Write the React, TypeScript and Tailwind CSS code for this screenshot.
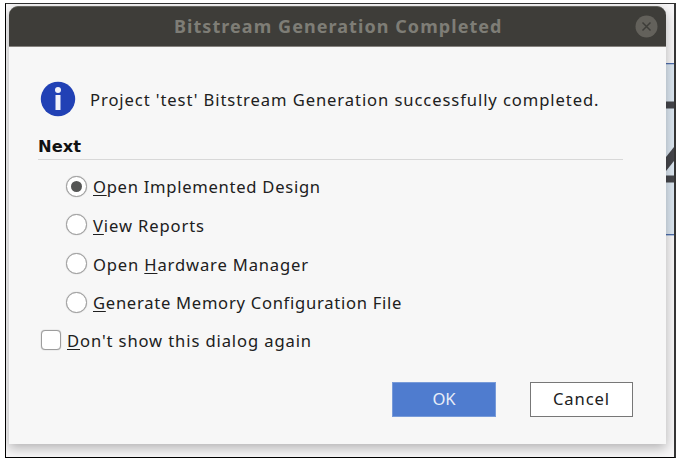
import React from "react";

function Radio({ checked = false, children, track }: { checked?: boolean; children: React.ReactNode; track: string }) {
  return (
    <label className="flex h-[38.6px] items-center">
      <span className="flex size-[21px] shrink-0 items-center justify-center rounded-full border-[1.5px] border-[#9d9d9d] bg-white shadow-[0_0_1px_#9d9d9d]">
        {checked && <span className="size-[11px] rounded-full bg-[#555655]" />}
      </span>
      <span className={`ml-[6px] whitespace-nowrap pt-[3px] ${track}`}>{children}</span>
    </label>
  );
}

function Key({ children }: { children: string }) {
  return <span className="underline decoration-1 underline-offset-2">{children}</span>;
}

export default function App() {
  return (
    <div className="h-[463px] w-[682px] overflow-hidden bg-white pl-[5px] pt-[3px] font-['Noto_Sans',sans-serif] text-[16.6px] text-[#202020]">
      <div className="relative h-[455px] w-[671px] overflow-hidden border border-black border-t-[#303030] border-r-2 border-r-[#353535] bg-[#f7f6f7] pl-[3px] pt-[2px]">
        <svg className="absolute left-[650px] top-[59px]" width="18" height="173" viewBox="0 0 18 173">
          <path fill="#dbe6f0" d="M0 0h18v173H0z" />
          <path fill="#4d6dac" d="M0 0h18v1.3H0zM0 171h18v1.3H0z" />
          <path fill="#45464b" d="M0 38.5h18v7H0zM0 112.5h18v7H0z" />
          <path stroke="#45464b" strokeWidth="8.8" d="M2 111l24-30" />
        </svg>
        <main className="relative h-[438px] w-[657px] rounded-t-[9px] bg-[#f7f7f7] shadow-[0_4px_12px_rgba(0,0,0,0.28)]">
          <header className="flex h-[41px] items-center rounded-t-[9px] border-t border-b border-t-[#63625d] border-b-[#85827e] bg-[#3e3d39]">
            <h1 className="ml-[165px] w-[330px] whitespace-nowrap text-[18px] font-bold tracking-[1.06px] text-[#7e7d76]">Bitstream Generation Completed</h1>
            <svg className="ml-[131px]" width="23" height="23" viewBox="0 0 23 23">
              <circle cx="11.5" cy="11.5" r="11" fill="#63615b" />
              <path d="M7.5 7.5l8 8m0-8l-8 8" stroke="#3e3d39" strokeWidth="1.5" />
            </svg>
          </header>
          <div className="flex h-[104px] items-center pl-[31px]">
            <svg width="36" height="36" viewBox="0 0 36 36">
              <circle cx="18" cy="18" r="17.2" fill="#2141b5" />
              <circle cx="18" cy="9" r="3" fill="#f1f2fa" />
              <path d="M15.5 14h5v15h-5z" fill="#f1f2fa" />
            </svg>
            <p className="ml-[14px] whitespace-nowrap pt-[3px] tracking-[0.91px]">Project 'test' Bitstream Generation successfully completed.</p>
          </div>
          <h2 className="-mt-[18px] ml-[29px] flex h-[27px] w-[585px] items-center border-b-[1.5px] border-[#d8d8d8] pt-[2px] font-['DejaVu_Sans',sans-serif] text-[16.3px] font-bold text-[#111]">Next</h2>
          <div className="ml-[57px] mt-[7px]">
            <Radio checked track="tracking-[0.72px]"><Key>O</Key>pen Implemented Design</Radio>
            <Radio track="tracking-[0.88px]"><Key>V</Key>iew Reports</Radio>
            <Radio track="tracking-[0.84px]">Open <Key>H</Key>ardware Manager</Radio>
            <Radio track="tracking-[0.72px]"><Key>G</Key>enerate Memory Configuration File</Radio>
          </div>
          <label className="ml-[32px] flex h-[38px] items-center">
            <span className="size-[20px] rounded-[4px] border-[1.5px] border-[#9d9d9d] bg-white shadow-[0_0_1px_#9d9d9d]" />
            <span className="ml-[6px] whitespace-nowrap pt-[3px] tracking-[0.88px]"><Key>D</Key>on't show this dialog again</span>
          </label>
          <div className="ml-[383px] mt-[23px] flex gap-[34px]">
            <button className="h-[35px] w-[104px] border border-[#789bd9] bg-[#4f7ccf] text-[#e8edf8]">OK</button>
            <button className="h-[35px] w-[103px] border border-[#777] bg-white tracking-[0.9px]">Cancel</button>
          </div>
        </main>
      </div>
    </div>
  );
}
